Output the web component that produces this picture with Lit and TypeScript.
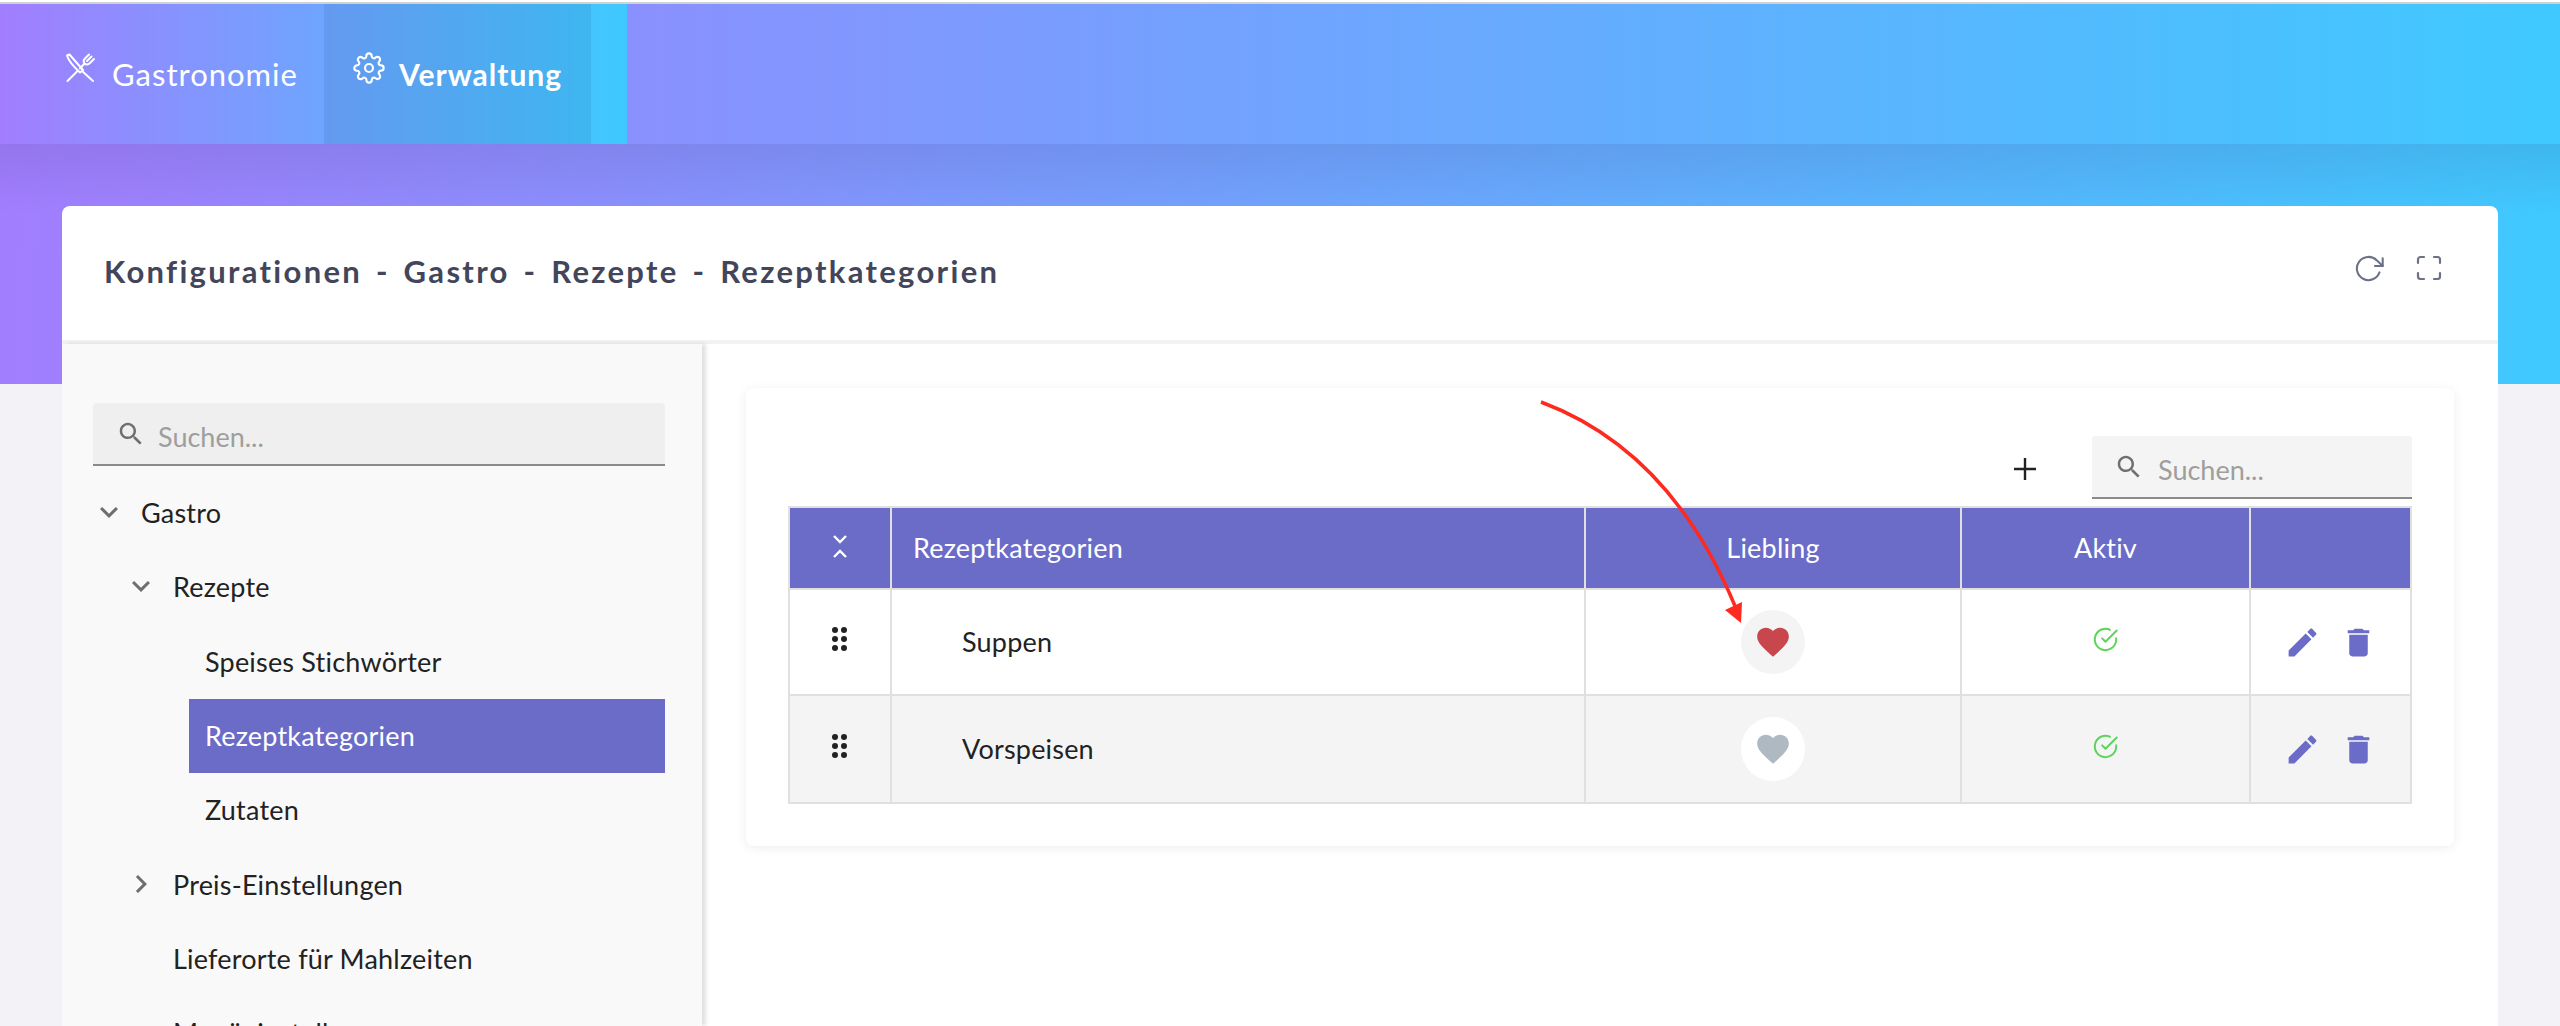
import { LitElement, html, css, svg } from "lit";
import { customElement } from "lit/decorators.js";

const SEARCH = "M15.5 14h-.79l-.28-.27C15.41 12.59 16 11.11 16 9.5 16 5.91 13.09 3 9.5 3S3 5.91 3 9.5 5.91 16 9.5 16c1.61 0 3.09-.59 4.23-1.57l.27.28v.79l5 4.99L20.49 19l-4.99-5zm-6 0C7.01 14 5 11.99 5 9.5S7.01 5 9.5 5 14 7.01 14 9.5 11.99 14 9.5 14z";
const DOWN = "M16.59 8.59L12 13.17 7.41 8.59 6 10l6 6 6-6z";
const RIGHT = "M10 6L8.59 7.41 13.17 12l-4.58 4.59L10 18l6-6z";
const HEART = "M12 21.35l-1.45-1.32C5.4 15.36 2 12.28 2 8.5 2 5.42 4.42 3 7.5 3c1.74 0 3.41.81 4.5 2.09C13.09 3.81 14.76 3 16.5 3 19.58 3 22 5.42 22 8.5c0 3.78-3.4 6.86-8.55 11.54L12 21.35z";
const PEN = "M3 17.25V21h3.75L17.81 9.94l-3.75-3.75L3 17.25zM20.71 7.04c.39-.39.39-1.02 0-1.41l-2.34-2.34c-.39-.39-1.02-.39-1.41 0l-1.83 1.83 3.75 3.75 1.83-1.83z";
const TRASH = "M6 19c0 1.1.9 2 2 2h8c1.1 0 2-.9 2-2V7H6v12zM19 4h-3.5l-1-1h-5l-1 1H5v2h14V4z";
const GEAR = "M19.4 15a1.65 1.65 0 0 0 .33 1.82l.06.06a2 2 0 0 1 0 2.83 2 2 0 0 1-2.83 0l-.06-.06a1.65 1.65 0 0 0-1.82-.33 1.65 1.65 0 0 0-1 1.51V21a2 2 0 0 1-2 2 2 2 0 0 1-2-2v-.09A1.65 1.65 0 0 0 9 19.4a1.65 1.65 0 0 0-1.82.33l-.06.06a2 2 0 0 1-2.83 0 2 2 0 0 1 0-2.83l.06-.06a1.65 1.65 0 0 0 .33-1.82 1.65 1.65 0 0 0-1.51-1H3a2 2 0 0 1-2-2 2 2 0 0 1 2-2h.09A1.65 1.65 0 0 0 4.6 9a1.65 1.65 0 0 0-.33-1.82l-.06-.06a2 2 0 0 1 0-2.83 2 2 0 0 1 2.83 0l.06.06a1.65 1.65 0 0 0 1.82.33H9a1.65 1.65 0 0 0 1-1.51V3a2 2 0 0 1 2-2 2 2 0 0 1 2 2v.09a1.65 1.65 0 0 0 1 1.51 1.65 1.65 0 0 0 1.82-.33l.06-.06a2 2 0 0 1 2.83 0 2 2 0 0 1 0 2.83l-.06.06a1.65 1.65 0 0 0-.33 1.82V9a1.65 1.65 0 0 0 1.51 1H21a2 2 0 0 1 2 2 2 2 0 0 1-2 2h-.09a1.65 1.65 0 0 0-1.51 1z";

const icon = (d: string, size: number, cls = "") =>
  html`<svg class=${cls} width=${size} height=${size} viewBox="0 0 24 24" fill="currentColor"><path d=${d}></path></svg>`;

const grip = html`<svg width="18" height="27" viewBox="0 0 18 27" fill="#222">
  ${[4, 13, 22].map((y) => svg`<circle cx="4" cy=${y} r="3"></circle><circle cx="13" cy=${y} r="3"></circle>`)}
</svg>`;

const check = html`<svg width="27" height="27" viewBox="0 0 24 24" fill="none" stroke="#5ed45e" stroke-width="1.8" stroke-linecap="round" stroke-linejoin="round"><path d="M21.5 11v1a9.5 9.5 0 1 1-5.6-8.7"></path><path d="M22 4 12 14l-3-3"></path></svg>`;

interface TreeRow { label: string; level: number; caret?: "down" | "right"; active?: boolean; }
const TREE: TreeRow[] = [
  { label: "Gastro", level: 0, caret: "down" },
  { label: "Rezepte", level: 1, caret: "down" },
  { label: "Speises Stichwörter", level: 2 },
  { label: "Rezeptkategorien", level: 2, active: true },
  { label: "Zutaten", level: 2 },
  { label: "Preis-Einstellungen", level: 1, caret: "right" },
  { label: "Lieferorte für Mahlzeiten", level: 1 },
  { label: "Menüeinstellungen", level: 1 },
];

const ROWS = [
  { name: "Suppen", fav: true },
  { name: "Vorspeisen", fav: false },
];

@customElement("app-root")
export class AppRoot extends LitElement {
  static styles = css`
    :host {
      display: block;
      position: relative;
      width: 100%;
      height: 1026px;
      overflow: hidden;
      font-family: "Lato", "Noto Sans", sans-serif;
      background:
        linear-gradient(180deg, rgba(60, 50, 120, 0.12), rgba(60, 50, 120, 0) 70px) 0 144px / 100% 240px no-repeat,
        linear-gradient(90deg, #a27efe, #3fc9fe) 0 0 / 100% 384px no-repeat,
        #f2f2f7;
    }
    .topline { height: 2px; background: #fff; border-bottom: 2px solid #cfd2d4; }
    .nav { height: 140px; background: linear-gradient(90deg, #a27efe, #3fc9fe); display: flex; }
    .tabs {
      width: 627px;
      display: flex;
      padding-left: 38px;
      box-sizing: border-box;
      background: linear-gradient(90deg, #a27efe, #3ec9fe);
    }
    .tab {
      display: flex;
      align-items: center;
      color: #fff;
      font-size: 31px;
      letter-spacing: 1px;
      box-sizing: border-box;
    }
    .tab svg { flex: none; margin-bottom: 12px; }
    .tab.one { width: 286px; padding-left: 28px; gap: 16px; }
    .tab.two { width: 267px; padding-left: 29px; gap: 14px; background: rgba(20, 60, 120, 0.1); font-weight: 700; font-size: 30px; }

    .page { padding: 62px 62px 0; height: 882px; box-sizing: border-box; }
    .card { background: #fff; border-radius: 8px 8px 0 0; height: 820px; display: flex; flex-direction: column; }
    .card-head {
      height: 134px;
      flex: none;
      display: flex;
      align-items: center;
      padding: 0 56px 0 42px;
      border-bottom: 4px solid #f2f2f4;
    }
    .card-title { font-size: 31px; font-weight: 700; color: #43465a; letter-spacing: 2.3px; word-spacing: 4px; flex: 1; padding-bottom: 4px; }
    .head-icons { display: flex; align-items: center; gap: 32px; color: #6c7189; margin-bottom: 10px; }

    .body { flex: 1; display: flex; min-height: 0; }
    .side {
      width: 640px;
      flex: none;
      background: #f9f9f9;
      box-shadow: 4px 0 4px rgba(0, 0, 0, 0.12);
      padding: 59px 37px 0 31px;
      box-sizing: border-box;
      position: relative;
    }
    .side-search {
      height: 63px;
      background: #efefef;
      border-bottom: 2px solid #8a8a8a;
      border-radius: 4px 4px 0 0;
      box-sizing: border-box;
      display: flex;
      align-items: center;
      padding-left: 23px;
      gap: 12px;
      color: #6f6f6f;
    }
    .ph { font-size: 27px; color: #9e9e9e; padding-top: 5px; }
    .tree { margin-top: 10px; }
    .row { height: 74.33px; display: flex; align-items: center; font-size: 27px; letter-spacing: 0.2px; color: #222; position: relative; padding-bottom: 1px; box-sizing: border-box; }
    .row.l0 { padding-left: 48px; }
    .row.l1 { padding-left: 80px; }
    .row.l2 { padding-left: 112px; }
    .row.active { margin-left: 96px; padding-left: 16px; background: #6b6bc8; color: #fff; }
    .caret { position: absolute; top: 18px; color: #6e6e6e; }
    .l0 .caret { left: -2px; }
    .l1 .caret { left: 30px; }

    .main { flex: 1; padding: 44px; min-width: 0; }
    .panel {
      height: 458px;
      box-sizing: border-box;
      padding: 48px 42px 42px;
      border-radius: 8px;
      background: #fff;
      box-shadow: 0 2px 12px rgba(0, 0, 0, 0.07);
    }
    .tools { display: flex; justify-content: flex-end; align-items: center; height: 63px; margin-bottom: 7px; }
    .plus { color: #222; margin-right: 56px; margin-top: 3px; display: flex; }
    .tool-search {
      width: 320px;
      height: 63px;
      box-sizing: border-box;
      background: #f4f4f4;
      border-bottom: 2px solid #8a8a8a;
      border-radius: 4px 4px 0 0;
      display: flex;
      align-items: center;
      padding-left: 22px;
      gap: 14px;
      color: #6f6f6f;
    }
    .grid {
      display: grid;
      grid-template-columns: 102px 694px 376px 289px 161px;
      grid-template-rows: 82px 106px 108px;
      border-top: 2px solid #e0e0e0;
      border-left: 2px solid #e0e0e0;
      font-size: 27px;
      letter-spacing: 0.2px;
      color: #222;
    }
    .c {
      border-right: 2px solid #e0e0e0;
      border-bottom: 2px solid #e0e0e0;
      display: flex;
      align-items: center;
      justify-content: center;
      box-sizing: border-box;
      min-width: 0;
    }
    .h { background: #6b6bc8; color: #fff; padding-bottom: 2px; }
    .h.first { justify-content: flex-start; padding-left: 21px; }
    .alt { background: #f4f4f4; }
    .name { justify-content: flex-start; padding-left: 70px; padding-bottom: 2px; }
    .up { padding-bottom: 6px; }
    .fav { width: 64px; height: 64px; border-radius: 50%; display: flex; align-items: center; justify-content: center; background: #f4f4f4; color: #c8474d; }
    .alt .fav { background: #fff; color: #aeb9c2; }
    .acts { gap: 19px; color: #6b6bc8; }
    .arrow { position: absolute; left: 0; top: 0; pointer-events: none; }
  `;

  render() {
    return html`
      <div class="topline"></div>
      <div class="nav">
        <div class="tabs">
          <div class="tab one">
            <svg width="30" height="30" viewBox="0 0 30 30" fill="none" stroke="#fff" stroke-width="2" stroke-linecap="round" stroke-linejoin="round">
              <path d="M1 2.5 3.5 1.5 17 17 14 19.5C8 14 3 9 1 2.5zM16 18 27 28"></path>
              <path d="M1.5 28 11.5 18M14 15.5 18.5 10.5C17 8.5 17.5 7 19 5.5L23 1.5M21 8 25.5 3.5M18.5 10.5C20.5 12 22.5 11.5 24 10L28 6"></path>
            </svg>
            <span>Gastronomie</span>
          </div>
          <div class="tab two">
            <svg width="32" height="32" viewBox="0 0 24 24" fill="none" stroke="#fff" stroke-width="1.6" stroke-linecap="round" stroke-linejoin="round">
              <circle cx="12" cy="12" r="3"></circle><path d=${GEAR}></path>
            </svg>
            <span>Verwaltung</span>
          </div>
        </div>
      </div>
      <div class="page">
        <div class="card">
          <div class="card-head">
            <div class="card-title">Konfigurationen - Gastro - Rezepte - Rezeptkategorien</div>
            <div class="head-icons">
              <svg width="31" height="31" viewBox="0 0 24 24" fill="none" stroke="currentColor" stroke-width="1.6" stroke-linecap="round" stroke-linejoin="round">
                <path d="M23 4v6h-6"></path><path d="M20.49 15a9 9 0 1 1-2.12-9.36L23 10"></path>
              </svg>
              <svg width="26" height="26" viewBox="0 0 26 26" fill="none" stroke="currentColor" stroke-width="2.2" stroke-linecap="round" stroke-linejoin="round">
                <path d="M8 2H4.5A2.5 2.5 0 0 0 2 4.5V8M18 2h3.500A2.500 2.500 0 0 1 24 4.500V8M24 18v3.500a2.500 2.500 0 0 1-2.500 2.500H18M8 24H4.500A2.500 2.500 0 0 1 2 21.500V18"></path>
              </svg>
            </div>
          </div>
          <div class="body">
            <aside class="side">
              <div class="side-search">${icon(SEARCH, 30)}<span class="ph">Suchen...</span></div>
              <div class="tree">
                ${TREE.map(
                  (r) => html`<div class="row l${r.level} ${r.active ? "active" : ""}">
                    ${r.caret ? icon(r.caret === "down" ? DOWN : RIGHT, 36, "caret") : ""}${r.label}
                  </div>`
                )}
              </div>
            </aside>
            <main class="main">
              <section class="panel">
                <div class="tools">
                  <span class="plus"><svg width="22" height="22" viewBox="0 0 22 22" stroke="#222" stroke-width="2.400"><path d="M11 0v22M0 11h22"></path></svg></span>
                  <div class="tool-search">${icon(SEARCH, 30)}<span class="ph">Suchen...</span></div>
                </div>
                <div class="grid">
                  <div class="c h">
                    <svg width="16" height="24" viewBox="0 0 16 24" fill="none" stroke="#fff" stroke-width="2.400"><path d="M2 1l6 6 6-6M2 22l6-6 6 6"></path></svg>
                  </div>
                  <div class="c h first">Rezeptkategorien</div>
                  <div class="c h">Liebling</div>
                  <div class="c h">Aktiv</div>
                  <div class="c h"></div>
                  ${ROWS.map((r, i) => {
                    const alt = i % 2 === 1 ? "alt" : "";
                    return html`
                      <div class="c up ${alt}">${grip}</div>
                      <div class="c name ${alt}">${r.name}</div>
                      <div class="c ${alt}"><span class="fav">${icon(HEART, 38)}</span></div>
                      <div class="c up ${alt}">${check}</div>
                      <div class="c acts ${alt}">${icon(PEN, 37)}${icon(TRASH, 37)}</div>
                    `;
                  })}
                </div>
              </section>
            </main>
          </div>
        </div>
      </div>
      <svg class="arrow" width="2560" height="1026" viewBox="0 0 2560 1026" fill="none">
        <path d="M1541 402Q1670 450 1735 606" stroke="#ff2a1f" stroke-width="3.500"></path>
        <path d="M1741 623 1725 610 1742 602z" fill="#ff2a1f"></path>
      </svg>
    `;
  }
}
